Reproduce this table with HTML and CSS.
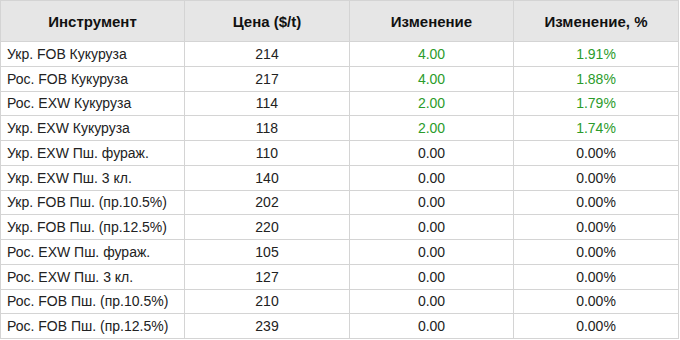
FILE: index.html
```html
<!DOCTYPE html>
<html lang="ru">
<head>
<meta charset="utf-8">
<link rel="stylesheet" href="styles.css">
</head>
<body>
<table class="quotes">
  <colgroup>
    <col class="c1"><col class="c2"><col class="c3"><col class="c4">
  </colgroup>
  <thead>
    <tr><th>Инструмент</th><th>Цена ($/t)</th><th>Изменение</th><th>Изменение, %</th></tr>
  </thead>
  <tbody>
    <tr><td class="name">Укр. FOB Кукуруза</td><td>214</td><td class="up">4.00</td><td class="up">1.91%</td></tr>
    <tr><td class="name">Рос. FOB Кукуруза</td><td>217</td><td class="up">4.00</td><td class="up">1.88%</td></tr>
    <tr><td class="name">Рос. EXW Кукуруза</td><td>114</td><td class="up">2.00</td><td class="up">1.79%</td></tr>
    <tr><td class="name">Укр. EXW Кукуруза</td><td>118</td><td class="up">2.00</td><td class="up">1.74%</td></tr>
    <tr><td class="name">Укр. EXW Пш. фураж.</td><td>110</td><td>0.00</td><td>0.00%</td></tr>
    <tr><td class="name">Укр. EXW Пш. 3 кл.</td><td>140</td><td>0.00</td><td>0.00%</td></tr>
    <tr><td class="name">Укр. FOB Пш. (пр.10.5%)</td><td>202</td><td>0.00</td><td>0.00%</td></tr>
    <tr><td class="name">Укр. FOB Пш. (пр.12.5%)</td><td>220</td><td>0.00</td><td>0.00%</td></tr>
    <tr><td class="name">Рос. EXW Пш. фураж.</td><td>105</td><td>0.00</td><td>0.00%</td></tr>
    <tr><td class="name">Рос. EXW Пш. 3 кл.</td><td>127</td><td>0.00</td><td>0.00%</td></tr>
    <tr><td class="name">Рос. FOB Пш. (пр.10.5%)</td><td>210</td><td>0.00</td><td>0.00%</td></tr>
    <tr><td class="name">Рос. FOB Пш. (пр.12.5%)</td><td>239</td><td>0.00</td><td>0.00%</td></tr>
  </tbody>
</table>
</body>
</html>
```

FILE: styles.css
```css
html, body {
  margin: 0;
  padding: 0;
  background: #ffffff;
}
body {
  font-family: "Liberation Sans", Arial, sans-serif;
  font-size: 14px;
  color: #222222;
}
.quotes {
  border-collapse: collapse;
  table-layout: fixed;
  width: 679px;
}
.c1 { width: 184px; }
.c2 { width: 165px; }
.c3 { width: 164px; }
.c4 { width: 165px; }
.quotes th,
.quotes td {
  border: 1px solid #d4d4d4;
  text-align: center;
  padding: 0 6px;
  white-space: nowrap;
}
.quotes th {
  background: #e6e6e6;
  color: #111111;
  font-size: 15px;
  font-weight: bold;
  height: 40px;
}
.quotes td {
  height: 23.75px;
  line-height: 16px;
  padding-top: 0;
  padding-bottom: 0;
}
.quotes td.name {
  text-align: left;
}
.quotes td.up {
  color: #2b9b2b;
}
```
